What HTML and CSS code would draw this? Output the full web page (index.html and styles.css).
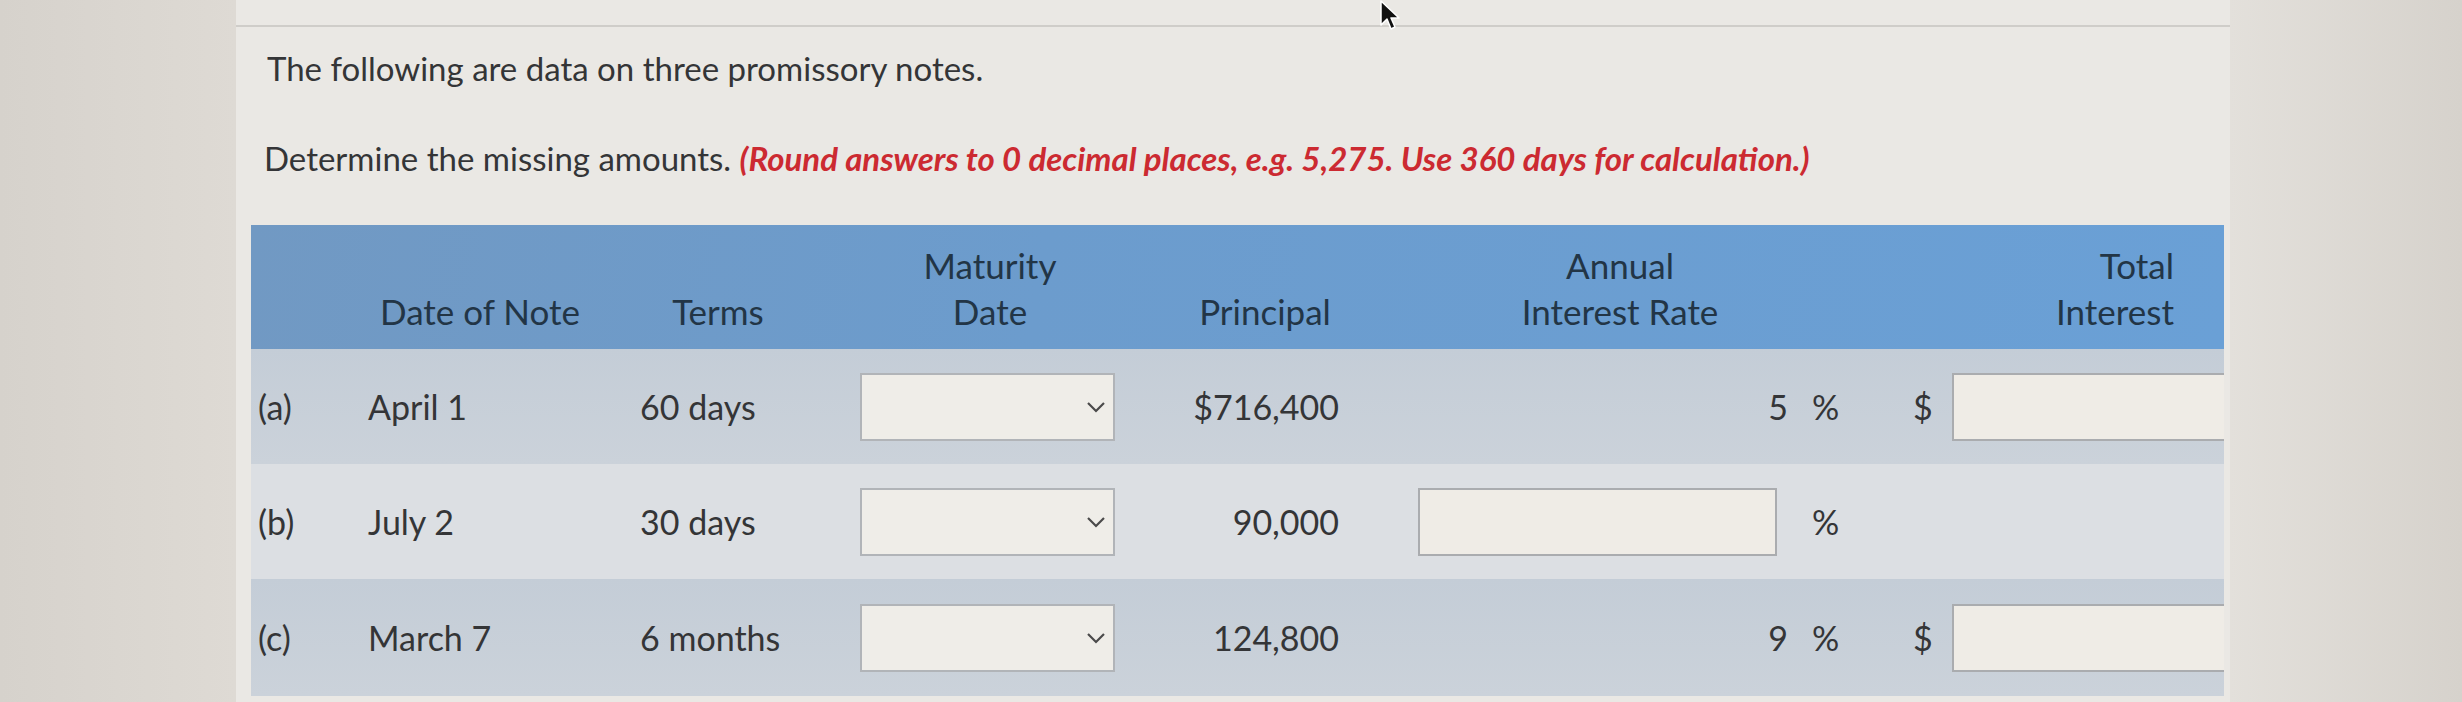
FILE: index.html
```html
<!DOCTYPE html>
<html lang="en">
<head>
<meta charset="utf-8">
<title>Promissory notes</title>
<link rel="stylesheet" href="styles.css">
</head>
<body>
<div class="screen">
  <div class="margin-left"></div>
  <main class="panel">
    <hr class="rule">
    <p class="intro">The following are data on three promissory notes.</p>
    <p class="task">Determine the missing amounts. <span class="hint">(Round answers to 0 decimal places, e.g. 5,275. Use 360 days for calculation.)</span></p>

    <div class="table">
      <div class="row head">
        <div class="hc h1"></div>
        <div class="hc h2">Date of Note</div>
        <div class="hc h3">Terms</div>
        <div class="hc h4">Maturity<br>Date</div>
        <div class="hc h5">Principal</div>
        <div class="hc h6">Annual<br>Interest Rate</div>
        <div class="hc h7">Total<br>Interest</div>
      </div>

      <div class="row dark">
        <div class="c1">(a)</div>
        <div class="c2">April 1</div>
        <div class="c3">60 days</div>
        <div class="c4"><div class="select"><svg class="chev" width="20" height="12" viewBox="0 0 20 12"><path d="M2 2 L10 10 L18 2" fill="none" stroke="#4a4a4a" stroke-width="2.2"/></svg></div></div>
        <div class="c5">$716,400</div>
        <div class="c6"><div class="slot">5</div><span class="pct">%</span></div>
        <div class="c7"><span class="dollar">$</span><div class="box wide"></div></div>
      </div>

      <div class="row light">
        <div class="c1">(b)</div>
        <div class="c2">July 2</div>
        <div class="c3">30 days</div>
        <div class="c4"><div class="select"><svg class="chev" width="20" height="12" viewBox="0 0 20 12"><path d="M2 2 L10 10 L18 2" fill="none" stroke="#4a4a4a" stroke-width="2.2"/></svg></div></div>
        <div class="c5">90,000</div>
        <div class="c6"><div class="slot"><div class="box rate"></div></div><span class="pct">%</span></div>
        <div class="c7"></div>
      </div>

      <div class="row dark last">
        <div class="c1">(c)</div>
        <div class="c2">March 7</div>
        <div class="c3">6 months</div>
        <div class="c4"><div class="select"><svg class="chev" width="20" height="12" viewBox="0 0 20 12"><path d="M2 2 L10 10 L18 2" fill="none" stroke="#4a4a4a" stroke-width="2.2"/></svg></div></div>
        <div class="c5">124,800</div>
        <div class="c6"><div class="slot">9</div><span class="pct">%</span></div>
        <div class="c7"><span class="dollar">$</span><div class="box wide"></div></div>
      </div>
    </div>
  </main>
  <div class="margin-right"></div>
</div>
<svg class="cursor" width="22" height="32" viewBox="0 0 22 32" aria-hidden="true">
  <path d="M2 1 L2 25 L8 19 L12 29 L16 27 L12 18 L20 18 Z" fill="#111" stroke="#fff" stroke-width="1.5" stroke-linejoin="round"/>
</svg>
</body>
</html>
```

FILE: styles.css
```css
html, body {
  margin: 0;
  padding: 0;
}
body {
  background: #d9d5cf;
  font-family: Lato, "Open Sans", "Liberation Sans", sans-serif;
  color: #343537;
  width: 2462px;
  height: 702px;
  overflow: hidden;
  position: relative;
}
.screen {
  display: flex;
  height: 702px;
}
.margin-left {
  width: 236px;
  background: linear-gradient(90deg, #d6d2cc, #dedad4);
}
.margin-right {
  flex: 1;
  background: linear-gradient(90deg, #e3e0db, #d6d2cc);
}
.panel {
  width: 1994px;
  background: #eae8e4;
  padding-top: 25px;
  box-sizing: border-box;
}
.rule {
  margin: 0;
  border: 0;
  border-top: 2px solid #cfcdc9;
}
.intro {
  margin: 21px 0 0 31px;
  font-size: 33px;
  line-height: 40px;
}
.task {
  margin: 50px 0 0 28px;
  font-size: 33px;
  line-height: 40px;
}
.hint {
  color: #cc2a31;
  font-weight: 700;
  font-style: italic;
}
.table {
  margin: 47px 0 0 15px;
  width: 1973px;
}
.row {
  display: grid;
  grid-template-columns: 109px 240px 250px 280px 230px 520px 344px;
  align-items: center;
  font-size: 34px;
  height: 115px;
}
.row.head {
  height: 124px;
  align-items: end;
  background: linear-gradient(100deg, #7199c3 0%, #6c9ccd 40%, #6aa0d6 100%);
  color: #223546;
  font-size: 35px;
  line-height: 46px;
  padding-bottom: 15px;
  box-sizing: border-box;
}
.row.dark {
  background: linear-gradient(180deg, #c4cdd7, #cbd2da);
}
.row.light {
  background: #dcdfe3;
}
.row.last {
  height: 117px;
}
.hc {
  text-align: center;
}
.h3 { padding-right: 14px; }
.h5 { padding-left: 40px; }
.h7 { text-align: right; padding-right: 50px; }

.c1 { padding-left: 7px; }
.c2 { padding-left: 8px; }
.c3 { padding-left: 40px; }
.c5 { text-align: right; padding-right: 21px; }
.c6 {
  display: flex;
  align-items: center;
  padding-left: 58px;
}
.slot {
  width: 370px;
  display: flex;
  justify-content: flex-end;
}
.pct {
  margin-left: 24px;
}
.c7 {
  display: flex;
  align-items: center;
  padding-left: 33px;
}
.dollar {
  width: 39px;
}
.select {
  margin-left: 10px;
  width: 255px;
  height: 68px;
  background: #efede8;
  border: 2px solid #b1b4b8;
  box-sizing: border-box;
  position: relative;
}
.chev {
  position: absolute;
  right: 7px;
  top: 26px;
}
.box {
  background: #efece6;
  border: 2px solid #aaacaf;
  box-sizing: border-box;
  height: 68px;
}
.box.rate {
  width: 359px;
  margin-right: 11px;
}
.box.wide {
  flex: 1;
  border-right: none;
}
.cursor {
  position: absolute;
  left: 1379px;
  top: 0;
}
```
